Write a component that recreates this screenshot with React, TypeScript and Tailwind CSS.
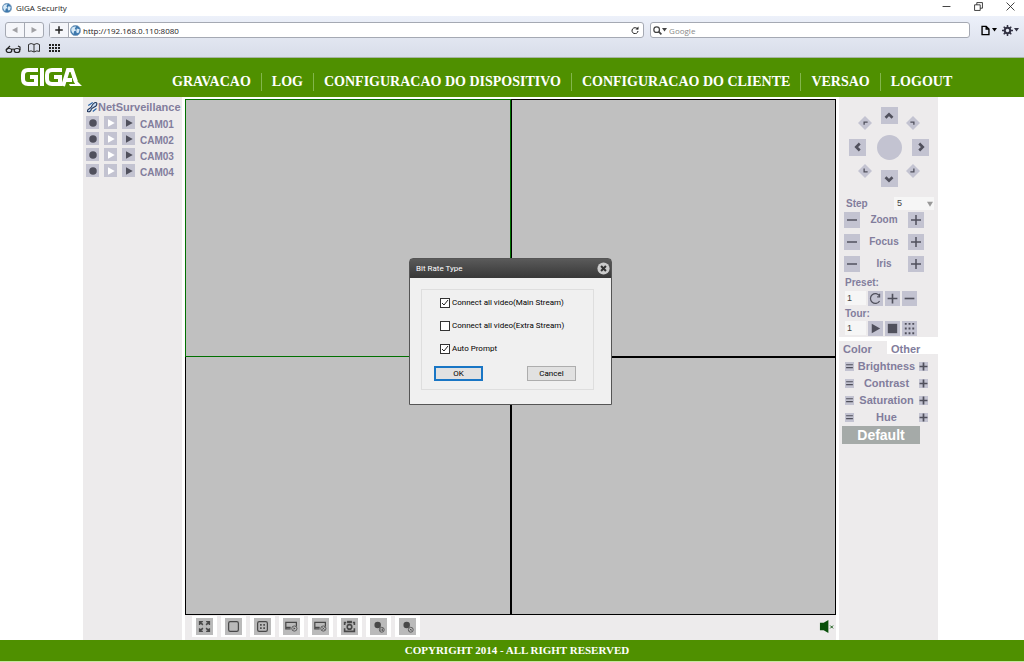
import type { ReactNode } from "react";

const cams = ["CAM01", "CAM02", "CAM03", "CAM04"];
const menu = ["GRAVACAO", "LOG", "CONFIGURACAO DO DISPOSITIVO", "CONFIGURACAO DO CLIENTE", "VERSAO", "LOGOUT"];

function Icon({ size = 16, label, children }: { size?: number; label?: string; children: ReactNode }) {
  return (
    <svg width={size} height={size} viewBox="0 0 16 16" fill="none" stroke="currentColor" strokeWidth="1.5" aria-label={label} className="block shrink-0">
      {children}
    </svg>
  );
}

const Globe = ({ size }: { size: number }) => (
  <Icon size={size}>
    <circle cx="8" cy="8" r="7.5" fill="#3d78ad" stroke="#8da9c4" strokeWidth="1" />
    <path d="M2 5C4 2 7 2 9 2L7 5l2 3-3 1-1 4C3 11 1 8 2 5ZM10 5l4 1-1 5-3 1-1-3Z" fill="#d7eaf7" stroke="none" />
  </Icon>
);

const Caret = () => (
  <svg width="5" height="4" viewBox="0 0 5 4" className="shrink-0"><path d="M0 0h5L2.500 3.500Z" fill="currentColor" /></svg>
);

const Plus = () => <path d="M8 3v10M3 8h10" />;
const Minus = () => <path d="M3 8h10" />;
const Play = ({ fill = "currentColor" }: { fill?: string }) => <path d="M4 3l9 5-9 5Z" fill={fill} stroke="none" />;

function PadButton({ label, children, size = "size-4" }: { label: string; children: ReactNode; size?: string }) {
  return (
    <button aria-label={label} className={`${size} shrink-0 flex items-center justify-center bg-[#c3c3d1] text-[#50505c]`}>
      {children}
    </button>
  );
}

function WindowBar() {
  return (
    <div className="h-4 flex items-center justify-between bg-white px-[2px]">
      <div className="flex items-center gap-1">
        <Globe size={10} />
        <h1 className="font-['Open_Sans',sans-serif] text-[8px] leading-4 text-[#222]">GIGA Security</h1>
      </div>
      <div className="flex items-center gap-[23px] pr-[7px] pb-[3px] text-[#222]">
        <button aria-label="Minimize"><Icon size={9}><path d="M1 8h14" /></Icon></button>
        <button aria-label="Restore"><Icon size={9}><path d="M1 5h10v10H1ZM5 5V1h10v10h-4" /></Icon></button>
        <button aria-label="Close"><Icon size={9}><path d="M1 1l14 14M15 1L1 15" /></Icon></button>
      </div>
    </div>
  );
}

function BrowserBar() {
  return (
    <div className="h-[42px] border-b border-[#a9b5a5] bg-linear-to-b from-[#edf1fa] to-[#d8dde9] px-[5px] pt-[6px] font-['Open_Sans',sans-serif] text-[8px] text-[#222]">
      <div className="flex h-4 items-center">
        <div className="flex h-4 w-[39px] shrink-0 divide-x divide-[#a5a9b3] rounded-[3px] border border-[#a5a9b3] bg-[#f5f6fa] text-[#a0a0a4]">
          <button aria-label="Back" className="flex flex-1 items-center justify-center"><Icon size={8}><path d="M13 2v12L2 8Z" fill="currentColor" stroke="none" /></Icon></button>
          <button aria-label="Forward" className="flex flex-1 items-center justify-center"><Icon size={8}><path d="M3 2v12l11-6Z" fill="currentColor" stroke="none" /></Icon></button>
        </div>
        <div className="ml-[5px] flex h-4 min-w-0 flex-[597] items-center rounded-[3px] border border-[#a5a9b3] bg-white">
          <button aria-label="Add bookmark" className="flex h-full w-[19px] items-center justify-center border-r border-[#a5a9b3] bg-[#f5f6fa]">
            <Icon size={12}><path d="M8 3v10M3 8h10" strokeWidth="2" /></Icon>
          </button>
          <span className="mx-px"><Globe size={11} /></span>
          <input aria-label="Address" defaultValue="http://192.168.0.110:8080" className="ml-px h-full min-w-0 flex-1 bg-transparent outline-none" />
          <button aria-label="Reload" className="mr-1">
            <Icon size={8}><path d="M13 6A6 6 0 1 0 14 10" strokeWidth="2" /><path d="M15 1v6H9Z" fill="currentColor" stroke="none" /></Icon>
          </button>
        </div>
        <div className="ml-[6px] flex h-4 min-w-0 flex-[318] items-center rounded-[3px] border border-[#a5a9b3] bg-white pl-[2px] text-[#444]">
          <Icon size={9}><circle cx="6.500" cy="6.500" r="5" strokeWidth="2.200" /><path d="M10 10l5 5" strokeWidth="3" /></Icon>
          <Caret />
          <input aria-label="Search" placeholder="Google" className="ml-[2px] h-full min-w-0 flex-1 bg-transparent outline-none placeholder:text-[#888]" />
        </div>
        <button aria-label="Page menu" className="ml-[10px] flex items-center gap-px text-black">
          <Icon size={11}><path d="M3 2h6l4 4v8H3ZM9 2v4h4" strokeWidth="2" /></Icon><Caret />
        </button>
        <button aria-label="Settings" className="ml-[5px] flex items-center gap-px text-[#334]">
          <Icon size={11}><circle cx="8" cy="8" r="4" strokeWidth="3" /><path d="M8 0v4M8 12v4M0 8h4M12 8h4M2.500 2.500l3 3M10.500 10.500l3 3M13.500 2.500l-3 3M5.500 10.500l-3 3" strokeWidth="2.200" /></Icon><Caret />
        </button>
      </div>
      <div className="flex items-center gap-[7px] pt-[3px]">
        <button aria-label="Reading list">
          <svg width="16" height="14" viewBox="0 0 16 14" fill="none" stroke="#222" strokeWidth="1.200"><ellipse cx="4" cy="9.500" rx="2.800" ry="2" /><ellipse cx="12" cy="9.500" rx="2.800" ry="2" /><path d="M6.500 8.500q1.500-1 3 0M1 9L5 5M15 9V6l-2-1" /></svg>
        </button>
        <button aria-label="Bookmarks">
          <svg width="12" height="10" viewBox="0 0 12 10" fill="none" stroke="#333"><path d="M6 1.500Q3-.5.500 1.500v7Q3 7 6 9Q9 7 11.500 8.500v-7Q9-.5 6 1.500V9" /></svg>
        </button>
        <button aria-label="Top sites" className="ml-[2px]">
          <svg width="11" height="9" viewBox="0 0 11 9" fill="#222"><path d="M0 0h2v2H0ZM3 0h2v2H3ZM6 0h2v2H6ZM9 0h2v2H9ZM0 3h2v2H0ZM3 3h2v2H3ZM6 3h2v2H6ZM9 3h2v2H9ZM0 6h2v2H0ZM3 6h2v2H3ZM6 6h2v2H6ZM9 6h2v2H9Z" /></svg>
        </button>
      </div>
    </div>
  );
}

function Header() {
  return (
    <header className="flex h-[39px] shrink-0 items-start bg-[#4f9000] text-white">
      {/* Brand mark */}
      <svg role="img" aria-label="GIGA" width="62" height="20" viewBox="0 0 62 20" fill="none" stroke="white" strokeWidth="4" className="ml-5 mt-[9px] shrink-0">
        <path d="M18 3H8Q3 3 3 8v4q0 5 5 5h8V10H10M22 1v18M42 3H32Q27 3 27 8v4q0 5 5 5h8V10H34" />
        <path d="M43 19L48 3h4l4 12M46 13h6" />
        <path d="M52 9l10 10H50l-1-2h6Z" fill="white" stroke="none" />
      </svg>
      <nav className="ml-20 mt-[15px] flex font-['Liberation_Serif',serif] text-[14px] font-bold leading-[18px] whitespace-nowrap divide-x divide-[#83b64c]">
        {menu.map((item) => (
          <a key={item} href="#" className="px-[10px]">{item}</a>
        ))}
      </nav>
    </header>
  );
}

function CameraList() {
  return (
    <aside className="w-[99px] shrink-0 bg-[#edebec] pt-[2px] pl-[3px] text-[#827d9c]">
      <div className="mb-px flex items-center">
        <Icon size={12}>
          <path d="M2 14c-1-4 3-3 5-6 2-4 3-6 6-6 2 0 2 3 0 5-3 2-5 2-6 4 0 2-2 4-5 3Z" stroke="#22375c" fill="#c8dcf2" />
          <path d="M3 6l6-4M9 14l5-4" stroke="#2864a8" />
        </Icon>
        <h2 className="text-[11px] font-bold leading-4">NetSurveillance</h2>
      </div>
      <ul>
        {cams.map((cam) => (
          <li key={cam} className="mb-[3px] flex h-[13px] items-start">
            <PadButton label={`Record ${cam}`} size="size-[13px]"><Icon size={12}><circle cx="8" cy="8" r="5" fill="currentColor" stroke="none" /></Icon></PadButton>
            <span className="ml-[5px]"><PadButton label={`Main stream ${cam}`} size="size-[13px]"><Icon size={12}><Play fill="#fff" /></Icon></PadButton></span>
            <span className="ml-[5px]"><PadButton label={`Extra stream ${cam}`} size="size-[13px]"><Icon size={12}><Play /></Icon></PadButton></span>
            <span className="ml-[5px] pt-[2px] text-[10px] font-bold leading-[14px]">{cam}</span>
          </li>
        ))}
      </ul>
    </aside>
  );
}

const tools: { label: string; icon: ReactNode }[] = [
  { label: "Full screen", icon: <path d="M6 6L2 2M2 6V2h4M10 6l4-4M10 2h4v4M6 10l-4 4M2 10v4h4M10 10l4 4M14 10v4h-4" strokeWidth="1.800" /> },
  { label: "Single view", icon: <rect x="2" y="2" width="12" height="12" rx="2" /> },
  { label: "Four views", icon: <><rect x="2" y="2" width="12" height="12" rx="2" /><path d="M5 5h2v2H5ZM9 5h2v2H9ZM5 9h2v2H5ZM9 9h2v2H9Z" fill="currentColor" stroke="none" /></> },
  { label: "Open all main streams", icon: <><path d="M7 11H1V3h13v5M1 9h6" /><circle cx="11.500" cy="10.500" r="3.200" strokeWidth="1" /><path d="M10.500 9l2.500 1.500-2.500 1.500Z" fill="currentColor" stroke="none" /></> },
  { label: "Close all streams", icon: <><path d="M7 11H1V3h13v5M1 9h6" /><circle cx="11.500" cy="10.500" r="3.200" strokeWidth="1" /><path d="M10 9l3 3M13 9l-3 3" strokeWidth="1" /></> },
  { label: "Capture", icon: <><path d="M2 6V3h2M12 3h2v3M2 10v4h12v-4" strokeWidth="2" /><rect x="5" y="1" width="6" height="3" fill="currentColor" stroke="none" /><circle cx="8" cy="8.500" r="2.800" strokeWidth="2" /></> },
  { label: "Start recording", icon: <><circle cx="7" cy="6" r="4" fill="currentColor" stroke="none" /><circle cx="12" cy="12" r="3" strokeWidth="1" fill="#bbb" /><path d="M11 10.500v3M13 10.500v3" strokeWidth="1" /></> },
  { label: "Stop recording", icon: <><circle cx="7" cy="6" r="4" fill="currentColor" stroke="none" /><circle cx="12" cy="12" r="3" strokeWidth="1" fill="#bbb" /><path d="M11 11l2 2M13 11l-2 2" strokeWidth="1" /></> },
];

function VideoWall() {
  return (
    <section className="flex min-w-0 flex-1 flex-col">
      <div className="mt-[2px] grid flex-1 grid-cols-2 grid-rows-2 bg-[#c0c0c0]">
        <div className="border border-[#007000]" />
        <div className="border border-black" />
        <div className="border border-t-0 border-black" />
        <div className="border border-black" />
      </div>
      <div className="flex h-[25px] items-center bg-[#edebec] pb-[2px] pl-[7px] pr-[2px]">
        {tools.map((tool) => (
          <div key={tool.label} className="mr-1 flex h-[21px] w-[25px] items-center justify-center bg-white">
            <button aria-label={tool.label} className="flex size-[17px] items-center justify-center bg-[#bababa] text-[#484848]">
              <Icon size={13}>{tool.icon}</Icon>
            </button>
          </div>
        ))}
        <button aria-label="Mute" className="ml-auto text-[#0a500a]">
          <Icon size={15}><path d="M1 4h4v8H1ZM5 4l5-3v14l-5-3Z" fill="currentColor" stroke="none" /><path d="M12 7l3 3M15 7l-3 3" strokeWidth="1" /></Icon>
        </button>
      </div>
    </section>
  );
}

const chevrons = { up: "M4 10l4-4 4 4", left: "M10 4L6 8l4 4", right: "M6 4l4 4-4 4", down: "M4 6l4 4 4-4" };

function Move({ dir }: { dir: keyof typeof chevrons }) {
  return (
    <div className="flex items-center justify-center">
      <PadButton label={`Move ${dir}`} size="size-[17px]"><Icon size={14}><path d={chevrons[dir]} strokeWidth="3" /></Icon></PadButton>
    </div>
  );
}

function Diagonal({ label, cell, d }: { label: string; cell: string; d: string }) {
  return (
    <div className={`flex p-px ${cell}`}>
      <button aria-label={label} className="text-[#50505c]">
        <Icon size={14}><path d="M8 0l8 8-8 8-8-8Z" fill="#c3c3d1" stroke="none" /><path d={d} strokeWidth="1.500" /></Icon>
      </button>
    </div>
  );
}

function ControlPanel() {
  return (
    <aside className="w-[99px] shrink-0 bg-[#edebec] pt-[3px] text-[#827d9c] font-bold">
      <div className="ml-[3px] grid w-[94px] grid-cols-[31px_32px_31px] grid-rows-[31px_32px_31px]">
        <Diagonal label="Move up left" cell="items-end justify-end" d="M7 10V7h4" />
        <Move dir="up" />
        <Diagonal label="Move up right" cell="items-end justify-start" d="M5 7h4v3" />
        <Move dir="left" />
        <div className="flex items-center justify-center"><span className="size-[25px] rounded-full bg-[#c3c3d1]" /></div>
        <Move dir="right" />
        <Diagonal label="Move down left" cell="items-start justify-end" d="M7 5v4h4" />
        <Move dir="down" />
        <Diagonal label="Move down right" cell="items-start justify-start" d="M9 5v4H5" />
      </div>
      <div className="mt-[3px] flex h-[13px] items-center justify-between pl-[7px] pr-[4px] text-[10px] leading-[13px]">
        <label htmlFor="step">Step</label>
        <span className="grid w-10 items-center bg-[#f6f6f6]">
          <select id="step" defaultValue="5" className="col-start-1 row-start-1 h-[13px] appearance-none pl-[3px] text-[9px] font-normal leading-[13px] text-[#444]">
            <option>5</option>
          </select>
          <span className="pointer-events-none col-start-1 row-start-1 mr-px justify-self-end text-[#999]"><Icon size={6}><path d="M0 2h16L8 15Z" fill="currentColor" stroke="none" /></Icon></span>
        </span>
      </div>
      <div className="flex flex-col gap-[6px] pt-[2px] pl-[5px] pr-[14px] text-[10px] leading-4">
        {["Zoom", "Focus", "Iris"].map((name) => (
          <div key={name} className="flex items-center justify-between">
            <PadButton label={`${name} out`}><Icon><Minus /></Icon></PadButton>
            <span>{name}</span>
            <PadButton label={`${name} in`}><Icon><Plus /></Icon></PadButton>
          </div>
        ))}
      </div>
      <div className="pt-[3px] pl-[6px] text-[10px] leading-4">
        <label htmlFor="preset" className="block">Preset:</label>
        <div className="flex gap-[2px]">
          <input id="preset" defaultValue="1" className="h-[14px] w-[21px] bg-[#f6f6f6] pl-[2px] text-[9px] font-normal text-[#444]" />
          <PadButton label="Go to preset" size="size-[15px]"><Icon size={13}><path d="M13 5a6 6 0 1 0 0 6M13 2v4h-3" /></Icon></PadButton>
          <PadButton label="Add preset" size="size-[15px]"><Icon size={13}><path d="M8 2v12M2 8h12" strokeWidth="2" /></Icon></PadButton>
          <PadButton label="Remove preset" size="size-[15px]"><Icon size={13}><path d="M2 8h12" strokeWidth="2" /></Icon></PadButton>
        </div>
        <label htmlFor="tour" className="block leading-[15px]">Tour:</label>
        <div className="flex gap-[2px]">
          <input id="tour" defaultValue="1" className="h-[14px] w-[21px] bg-[#f6f6f6] pl-[2px] text-[9px] font-normal text-[#444]" />
          <PadButton label="Start tour" size="size-[15px]"><Icon size={15}><Play /></Icon></PadButton>
          <PadButton label="Stop tour" size="size-[15px]"><Icon size={15}><path d="M3 3h10v10H3Z" fill="currentColor" stroke="none" /></Icon></PadButton>
          <PadButton label="Edit tour" size="size-[15px]"><Icon size={15}><path d="M3 2h2v2H3ZM7 2h2v2H7ZM11 2h2v2h-2ZM3 7h2v2H3ZM7 7h2v2H7ZM11 7h2v2h-2ZM3 12h2v2H3ZM7 12h2v2H7ZM11 12h2v2h-2Z" fill="currentColor" stroke="none" /></Icon></PadButton>
        </div>
      </div>
      <div className="mt-px flex border-t-4 border-white text-[11px] leading-[17px]">
        <button className="w-12 pl-[4px] text-left">Color</button>
        <button className="flex-1 bg-linear-to-b from-white from-75% to-[#edebec] to-75% pl-[4px] text-left">Other</button>
      </div>
      <div className="flex flex-col text-[11px] leading-[17px]">
        {["Brightness", "Contrast", "Saturation", "Hue"].map((name) => (
          <div key={name} className="grid h-[17px] grid-cols-[9px_1fr_9px] items-center pl-[6px] pr-[10px] text-center">
            <PadButton label={`Less ${name}`} size="size-[9px]"><Icon size={9}><path d="M2 5h12M2 10h12" strokeWidth="1.800" /></Icon></PadButton>
            <span className="-mx-1">{name}</span>
            <PadButton label={`More ${name}`} size="size-[9px]"><Icon size={9}><path d="M8 1v14M1 8h14" strokeWidth="3" /></Icon></PadButton>
          </div>
        ))}
      </div>
      <button className="ml-[3px] block h-[18px] w-[78px] bg-[#a5aaa8] text-[14px] font-bold leading-[18px] text-white">Default</button>
    </aside>
  );
}

function Option({ label, checked }: { label: string; checked?: boolean }) {
  return (
    <label className="flex items-center gap-[2px] leading-3">
      <span className="grid size-[10px] place-items-center">
        <input type="checkbox" defaultChecked={checked} className="peer col-start-1 row-start-1 size-[10px] appearance-none border border-[#333] bg-white" />
        <svg width="8" height="8" viewBox="0 0 8 8" fill="none" stroke="#222" className="pointer-events-none invisible col-start-1 row-start-1 peer-checked:visible"><path d="M1 4l2 2 4-5" /></svg>
      </span>
      {label}
    </label>
  );
}

function BitRateDialog() {
  return (
    <div role="dialog" aria-labelledby="dialog-title" className="absolute left-1/2 top-[161px] ml-[-103px] w-[203px] rounded-t-[4px] border border-[#555] bg-[#f0f0f0] font-[Roboto,sans-serif] text-[8px] text-black">
      <div className="flex h-[19px] items-center justify-between bg-linear-to-b from-[#5a5a5a] to-[#383838] pl-[6px] pr-px">
        <h2 id="dialog-title" className="text-white">Bit Rate Type</h2>
        <button aria-label="Close dialog" className="text-[#333]">
          <Icon size={13}><circle cx="8" cy="8" r="7.500" fill="#ccc" stroke="none" /><path d="M5 5l6 6M11 5l-6 6" strokeWidth="2.500" /></Icon>
        </button>
      </div>
      <div className="mb-[14px] ml-[11px] mr-[17px] mt-[11px] flex h-[101px] flex-col border border-[#dedede] pl-[18px] pt-[7px]">
        <div className="flex flex-col gap-[11px]">
          <Option label="Connect all video(Main Stream)" checked />
          <Option label="Connect all video(Extra Stream)" />
          <Option label="Auto Prompt" checked />
        </div>
        <div className="mt-[11px] ml-[-6px] mr-[17px] flex justify-between">
          <button className="h-[15px] w-[49px] border-2 border-[#1976c5] bg-[#e1e1e1] leading-[11px]">OK</button>
          <button className="h-[15px] w-[49px] border border-[#adadad] bg-[#e1e1e1] leading-[13px]">Cancel</button>
        </div>
      </div>
    </div>
  );
}

export default function App() {
  return (
    <div className="flex min-h-screen flex-col bg-white font-['Liberation_Sans',sans-serif]">
      <WindowBar />
      <BrowserBar />
      <Header />
      <main className="relative flex flex-1 pr-[3px]">
        <div className="mx-auto flex w-full max-w-[855px] gap-[3px]">
          <CameraList />
          <VideoWall />
          <ControlPanel />
        </div>
        <BitRateDialog />
      </main>
      <footer className="h-[22px] border-b border-[#c5e8a0] bg-[#4f9000] text-center font-['Liberation_Serif',serif] text-[11px] font-bold leading-[20px] text-white">
        <p className="pl-[10px]">COPYRIGHT 2014 - ALL RIGHT RESERVED</p>
      </footer>
    </div>
  );
}
